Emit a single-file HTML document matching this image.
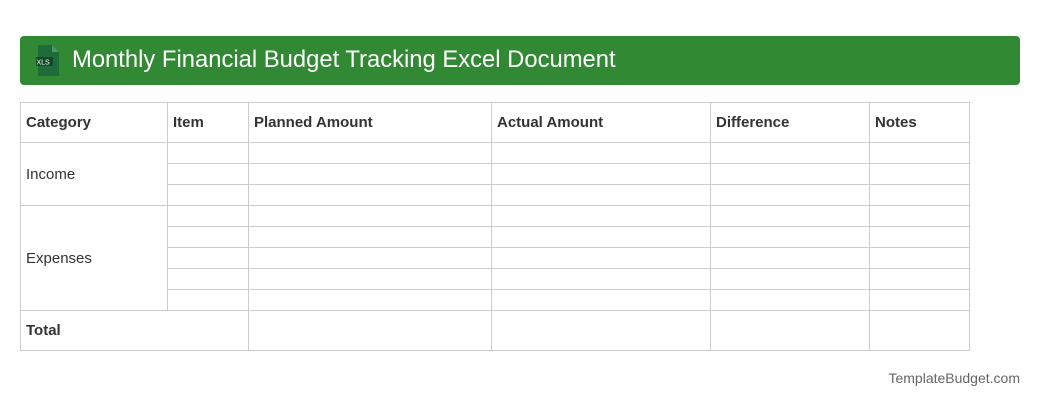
<!DOCTYPE html>
<html><head><style>
body{margin:0;width:1040px;height:408px;background:#fff;font-family:"Liberation Sans",sans-serif;position:relative;overflow:hidden}
.bar{position:absolute;left:20px;top:36px;width:1000px;height:49px;background:#328933;border-radius:4px}
.bar .t{position:absolute;left:52px;top:9px;color:#fff;font-size:23.8px;line-height:29px}
.icon{position:absolute;left:16px;top:9px}
table{position:absolute;left:20px;top:102px;border-collapse:collapse;font-size:15px;color:#333}
td{border:1px solid #ccc;padding:0 0 0 5px;height:20px}
tr.h td{height:39px;font-weight:bold}
tr.tot td{height:39px}
.f{position:absolute;right:20px;top:370px;color:#666;font-size:14px}
</style></head><body>
<div class="bar">
<svg class="icon" width="24" height="31" viewBox="0 0 24 31"><path d="M2 0H16L23 7V31H2Z" fill="#1f6b3a"/><path d="M16 0V7H23Z" fill="#4a9a63"/><rect x="-2" y="12" width="19" height="9" fill="#124a28"/><text x="0.5" y="19.5" font-size="7" fill="#fff" font-family="Liberation Sans">XLS</text></svg>
<div class="t">Monthly Financial Budget Tracking Excel Document</div></div>
<table>
<colgroup><col style="width:147px"><col style="width:81px"><col style="width:243px"><col style="width:219px"><col style="width:159px"><col style="width:100px"></colgroup>
<tr class="h"><td>Category</td><td>Item</td><td>Planned Amount</td><td>Actual Amount</td><td>Difference</td><td>Notes</td></tr>
<tr><td rowspan="3">Income</td><td></td><td></td><td></td><td></td><td></td></tr>
<tr><td></td><td></td><td></td><td></td><td></td></tr>
<tr><td></td><td></td><td></td><td></td><td></td></tr>
<tr><td rowspan="5">Expenses</td><td></td><td></td><td></td><td></td><td></td></tr>
<tr><td></td><td></td><td></td><td></td><td></td></tr>
<tr><td></td><td></td><td></td><td></td><td></td></tr>
<tr><td></td><td></td><td></td><td></td><td></td></tr>
<tr><td></td><td></td><td></td><td></td><td></td></tr>
<tr class="tot"><td colspan="2"><b>Total</b></td><td></td><td></td><td></td><td></td></tr>
</table>
<div class="f">TemplateBudget.com</div>
</body></html>
